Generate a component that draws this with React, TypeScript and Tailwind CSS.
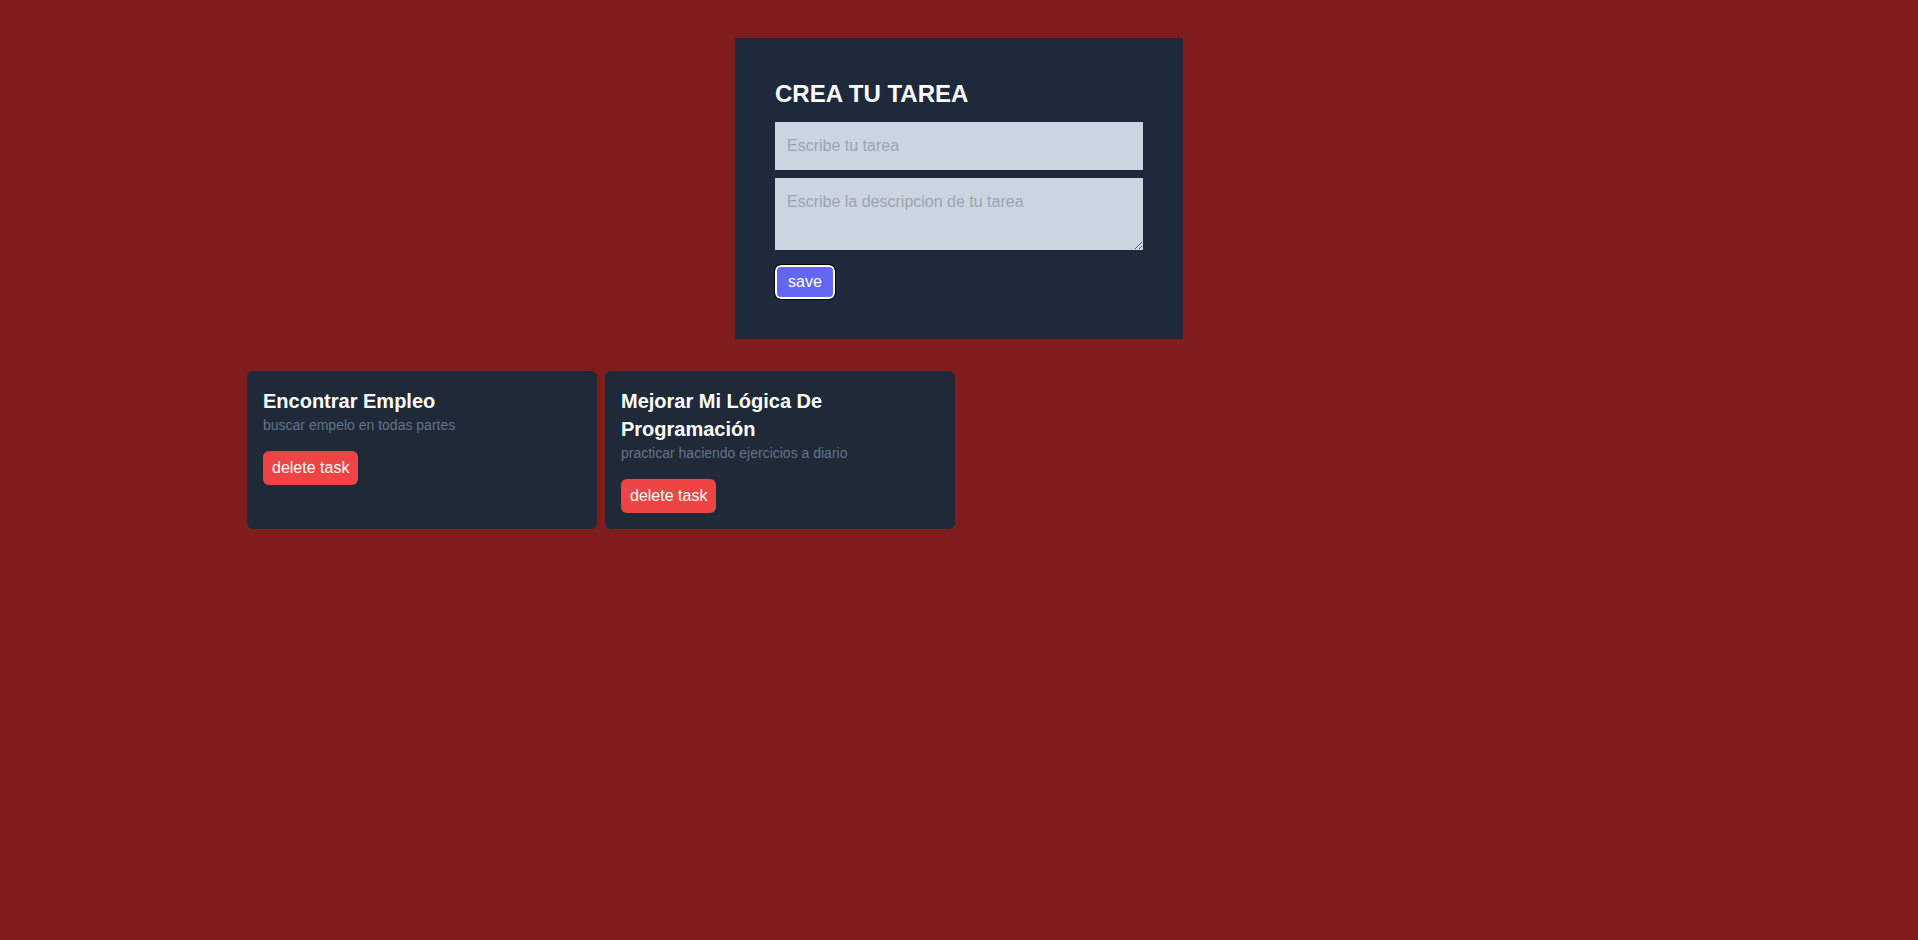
import React, { useState } from "react";

type Task = { id: number; title: string; description: string };

const initialTasks: Task[] = [
  { id: 1, title: "Encontrar Empleo", description: "buscar empelo en todas partes" },
  {
    id: 2,
    title: "Mejorar Mi Lógica De Programación",
    description: "practicar haciendo ejercicios a diario",
  },
];

const TaskForm = ({ onSave }: { onSave: (t: string, d: string) => void }) => {
  const [title, setTitle] = useState("");
  const [description, setDescription] = useState("");

  return (
    <form
      className="w-[448px] mx-auto bg-[#1e293b] p-10 flex flex-col"
      onSubmit={(e) => {
        e.preventDefault();
        onSave(title, description);
        setTitle("");
        setDescription("");
      }}
    >
      <h1 className="text-2xl font-bold text-white mb-3">CREA TU TAREA</h1>
      <input
        className="bg-[#cbd5e1] px-3 py-3 w-full mb-2 text-base leading-6 placeholder:text-[#9ca3af] outline-none"
        placeholder="Escribe tu tarea"
        value={title}
        onChange={(e) => setTitle(e.target.value)}
      />
      <textarea
        className="bg-[#cbd5e1] px-3 py-3 w-full h-[72px] mb-[15px] text-base leading-6 placeholder:text-[#9ca3af] outline-none block"
        placeholder="Escribe la descripcion de tu tarea"
        value={description}
        onChange={(e) => setDescription(e.target.value)}
      />
      <div>
        <button className="bg-[#6366f1] text-white px-[11px] py-[3px] leading-6 rounded-md border-2 border-white outline outline-1 outline-black">
          save
        </button>
      </div>
    </form>
  );
};

const TaskCard = ({ task, onDelete }: { task: Task; onDelete: () => void }) => (
  <div className="bg-[#1f2937] text-white p-4 rounded-md">
    <h2 className="text-xl font-bold">{task.title}</h2>
    <p className="text-sm text-[#64748b]">{task.description}</p>
    <button
      className="bg-[#ef4444] px-[9px] py-[5px] leading-6 rounded-md mt-4"
      onClick={onDelete}
    >
      delete task
    </button>
  </div>
);

export default function App() {
  const [tasks, setTasks] = useState<Task[]>(initialTasks);

  return (
    <main
      className="bg-[#7f1d1d] h-screen overflow-hidden pt-[38px]"
      style={{ fontFamily: '"Liberation Sans", Arial, sans-serif' }}
    >
      <TaskForm
        onSave={(t, d) =>
          setTasks([...tasks, { id: Date.now(), title: t, description: d }])
        }
      />
      <div className="w-[1424px] mx-auto grid grid-cols-4 gap-2 mt-8">
        {tasks.map((task) => (
          <TaskCard
            key={task.id}
            task={task}
            onDelete={() => setTasks(tasks.filter((t) => t.id !== task.id))}
          />
        ))}
      </div>
    </main>
  );
}
